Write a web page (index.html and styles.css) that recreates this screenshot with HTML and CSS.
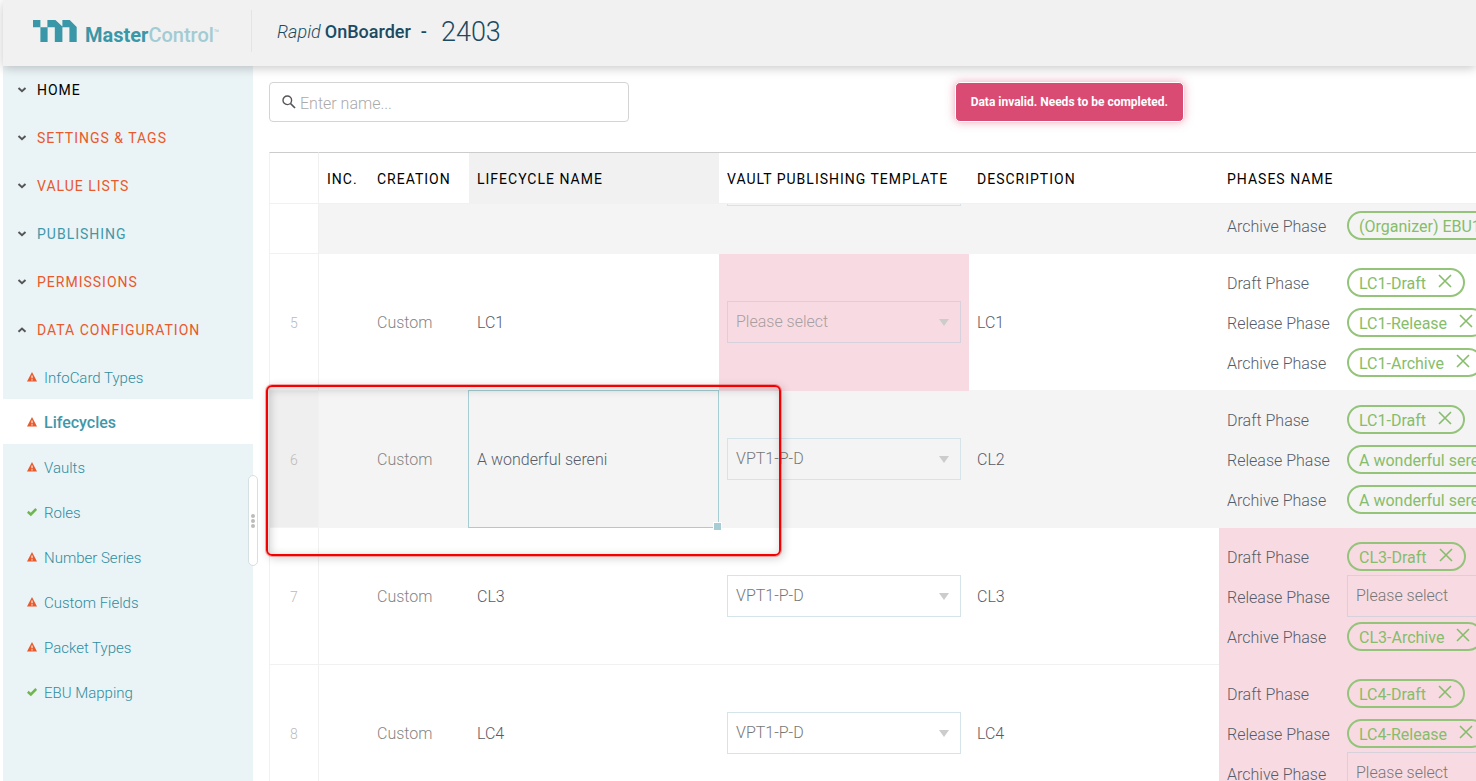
FILE: index.html
```html
<!DOCTYPE html>
<html lang="en">
<head>
<meta charset="utf-8">
<title>Rapid OnBoarder</title>
<link rel="stylesheet" href="styles.css">
</head>
<body>
<svg class="sprite" aria-hidden="true">
  <symbol id="down" viewBox="0 0 10 8"><path d="M1.5 2 5 5.3 8.5 2" fill="none" stroke="currentColor" stroke-width="1.9"/></symbol>
  <symbol id="up" viewBox="0 0 10 8"><path d="M1.5 5.8 5 2.5 8.5 5.8" fill="none" stroke="currentColor" stroke-width="1.9"/></symbol>
  <symbol id="warn" viewBox="0 0 10 10"><path d="M5 .1 10 9.6H0z" fill="#e8592b"/><path d="M5 3.4v2.8M5 7.2v1.2" stroke="#fff" stroke-width="1.1"/></symbol>
  <symbol id="ok" viewBox="0 0 10 10"><path d="M.8 4.8 3.8 7.5 9.2 2" fill="none" stroke="#6fb74c" stroke-width="2.5"/></symbol>
  <symbol id="close" viewBox="0 0 14 14"><path d="M1 1 13 13M13 1 1 13" fill="none" stroke="currentColor" stroke-width="1.6"/></symbol>
</svg>
<div class="app">
  <header class="topbar">
    <a class="brand" href="#" aria-label="MasterControl">
      <svg class="mark" width="44" height="22" viewBox="0 0 44 22"><path fill="#3a97a8" d="M0 0h7.4v7.3H0zM7.4 7.3h7V0h8l7 6.5V0h7.3L43.7 7v15h-7.3V7.3h-7V22h-7.6V7.3h-7.2V22H7.4z"/></svg>
      <span class="wordmark">Master<span class="wordmark-light">Control</span><span class="tm">™</span></span>
    </a>
    <h1 class="title"><em>Rapid</em> <strong>OnBoarder</strong><strong class="dash">-</strong><span class="release">2403</span></h1>
  </header>
  <div class="body">
    <nav class="sidebar">
      <button class="group current"><svg><use href="#down"/></svg>HOME</button>
      <button class="group alert"><svg><use href="#down"/></svg>SETTINGS &amp; TAGS</button>
      <button class="group alert"><svg><use href="#down"/></svg>VALUE LISTS</button>
      <button class="group"><svg><use href="#down"/></svg>PUBLISHING</button>
      <button class="group alert"><svg><use href="#down"/></svg>PERMISSIONS</button>
      <button class="group alert"><svg><use href="#up"/></svg>DATA CONFIGURATION</button>
      <a class="item" href="#"><svg><use href="#warn"/></svg><span>InfoCard Types</span></a>
      <a class="item active" href="#"><svg><use href="#warn"/></svg><span>Lifecycles</span></a>
      <a class="item" href="#"><svg><use href="#warn"/></svg><span>Vaults</span></a>
      <a class="item" href="#"><svg><use href="#ok"/></svg><span>Roles</span></a>
      <a class="item" href="#"><svg><use href="#warn"/></svg><span>Number Series</span></a>
      <a class="item" href="#"><svg><use href="#warn"/></svg><span>Custom Fields</span></a>
      <a class="item" href="#"><svg><use href="#warn"/></svg><span>Packet Types</span></a>
      <a class="item" href="#"><svg><use href="#ok"/></svg><span>EBU Mapping</span></a>
      <button class="resizer" aria-label="Resize sidebar"><i></i><i></i><i></i></button>
    </nav>
    <main class="main">
      <div class="toolbar">
        <label class="search">
          <svg width="14" height="14" viewBox="0 0 14 14"><circle cx="5.3" cy="5.3" r="4.3" fill="none" stroke="#555" stroke-width="1.4"/><path d="M8.5 8.5 13 13" stroke="#555" stroke-width="1.7"/></svg>
          <input type="text" placeholder="Enter name..." aria-label="Enter name">
        </label>
        <div class="toast" role="alert">Data invalid. Needs to be completed.</div>
      </div>
      <div class="grid">
        <table>
          <colgroup><col class="c-num"><col class="c-inc"><col class="c-creation"><col class="c-wide"><col class="c-wide"><col class="c-wide"><col class="c-phases"></colgroup>
          <thead>
            <tr><th class="num"></th><th>INC.</th><th>CREATION</th><th class="sel">LIFECYCLE NAME</th><th>VAULT PUBLISHING TEMPLATE</th><th>DESCRIPTION</th><th>PHASES NAME</th></tr>
          </thead>
          <tbody>
            <tr class="shade">
              <td class="num plain"></td><td></td><td></td><td></td>
              <td><span class="select"><select aria-label="Vault publishing template"></select></span></td><td></td>
              <td><div class="phase"></div><div class="phase"></div>
                <div class="phase"><span class="label">Archive Phase</span><span class="pill">(Organizer) EBU1</span></div></td>
            </tr>
            <tr id="row-5">
              <td class="num">5</td><td></td><td class="muted">Custom</td><td>LC1</td>
              <td class="invalid"><span class="select faded"><select aria-label="Vault publishing template"><option>Please select</option></select></span></td><td>LC1</td>
              <td>
                <div class="phase"><span class="label">Draft Phase</span><span class="pill">LC1-Draft<button aria-label="Remove"><svg><use href="#close"/></svg></button></span></div>
                <div class="phase"><span class="label">Release Phase</span><span class="pill">LC1-Release<button aria-label="Remove"><svg><use href="#close"/></svg></button></span></div>
                <div class="phase"><span class="label">Archive Phase</span><span class="pill">LC1-Archive<button aria-label="Remove"><svg><use href="#close"/></svg></button></span></div>
              </td>
            </tr>
            <tr class="shade">
              <td class="num">6</td><td></td><td class="muted">Custom</td><td class="picked">A wonderful sereni</td>
              <td><span class="select"><select aria-label="Vault publishing template"><option>VPT1-P-D</option></select></span></td><td>CL2</td>
              <td>
                <div class="phase"><span class="label">Draft Phase</span><span class="pill">LC1-Draft<button aria-label="Remove"><svg><use href="#close"/></svg></button></span></div>
                <div class="phase"><span class="label">Release Phase</span><span class="pill">A wonderful sereni</span></div>
                <div class="phase"><span class="label">Archive Phase</span><span class="pill">A wonderful sereni</span></div>
              </td>
            </tr>
            <tr>
              <td class="num">7</td><td></td><td class="muted">Custom</td><td>CL3</td>
              <td><span class="select"><select aria-label="Vault publishing template"><option>VPT1-P-D</option></select></span></td><td>CL3</td>
              <td class="invalid">
                <div class="phase"><span class="label">Draft Phase</span><span class="pill">CL3-Draft<button aria-label="Remove"><svg><use href="#close"/></svg></button></span></div>
                <div class="phase"><span class="label">Release Phase</span><span class="select"><select aria-label="Release phase"><option>Please select</option></select></span></div>
                <div class="phase"><span class="label">Archive Phase</span><span class="pill">CL3-Archive<button aria-label="Remove"><svg><use href="#close"/></svg></button></span></div>
              </td>
            </tr>
            <tr>
              <td class="num">8</td><td></td><td class="muted">Custom</td><td>LC4</td>
              <td><span class="select"><select aria-label="Vault publishing template"><option>VPT1-P-D</option></select></span></td><td>LC4</td>
              <td class="invalid">
                <div class="phase"><span class="label">Draft Phase</span><span class="pill">LC4-Draft<button aria-label="Remove"><svg><use href="#close"/></svg></button></span></div>
                <div class="phase"><span class="label">Release Phase</span><span class="pill">LC4-Release<button aria-label="Remove"><svg><use href="#close"/></svg></button></span></div>
                <div class="phase"><span class="label">Archive Phase</span><span class="select"><select aria-label="Archive phase"><option>Please select</option></select></span></div>
              </td>
            </tr>
          </tbody>
        </table>
      </div>
      <div class="highlight"></div>
    </main>
  </div>
</div>
<script src="app.js"></script>
</body>
</html>
```

FILE: app.js
```js
// Open the grid with row 5 as the first fully visible row, one phase line below the header.
document.querySelector('.grid').scrollTop = 87;
```

FILE: styles.css
```css
* { box-sizing: border-box; }
body { margin: 0; background: #fff; color: #565c68; font: 300 16px/20px Roboto, "Liberation Sans", sans-serif; overflow: hidden; }
button, input, select { font: inherit; color: inherit; }
button { border: 0; background: none; padding: 0; cursor: pointer; }
a { text-decoration: none; }
.sprite { position: absolute; width: 0; height: 0; }

.app { display: flex; flex-direction: column; height: 100vh; margin-left: 3px; }

.topbar { display: flex; align-items: center; height: 66px; flex: none; padding: 0 30px 4px; background: #f1f1f1; box-shadow: 0 2px 10px rgba(0, 0, 0, .22); position: relative; z-index: 5; }
.brand { display: flex; align-items: center; gap: 8px; width: 219px; height: 42px; border-right: 1px solid #e2e5e6; color: #3a97a8; }
.wordmark { font-size: 20px; line-height: 24px; font-weight: 700; padding-top: 5px; white-space: nowrap; }
.wordmark-light { font-weight: 500; color: #a3cbd2; }
.tm { font-size: 9px; font-weight: 400; color: #a3cbd2; vertical-align: 6px; }
.title { display: flex; align-items: center; margin: 0 0 0 25px; padding-top: 2px; font-size: 18px; line-height: 32px; font-weight: 300; color: #1c4a61; gap: 4px; }
.title strong { font-weight: 500; }
.dash { margin-left: 6px; }
.release { font-size: 27px; margin-left: 10px; }

.body { display: flex; flex: 1; min-height: 0; }
.sidebar { position: relative; z-index: 2; width: 250px; flex: none; background: #eaf3f6; color: #3f98a9; }
.group { display: flex; align-items: center; gap: 10px; width: 100%; height: 48px; padding-left: 14px; font-size: 14px; font-weight: 400; letter-spacing: 1px; text-align: left; }
.group svg { width: 10px; height: 8px; color: #555; }
.group.current { color: #000; }
.group.alert { color: #e8592b; }
.item { display: flex; align-items: center; gap: 7px; height: 45px; padding-left: 24px; font-size: 15px; font-weight: 300; color: #2f8c9e; }
.item span { padding-top: 2px; }
.item svg { width: 10px; height: 10px; }
.item.active { background: #fff; font-size: 16px; font-weight: 500; color: #3f98a9; }
.resizer { position: absolute; right: -5px; top: 409px; display: flex; flex-direction: column; align-items: center; justify-content: center; gap: 1px; width: 10px; height: 91px; border: 1px solid #d5e0e4; border-radius: 5px; background: #fff; }
.resizer i { width: 4px; height: 4px; border-radius: 50%; background: #bcbcbc; }

.main { position: relative; flex: 1; min-width: 0; display: flex; flex-direction: column; padding: 16px 0 0 16px; }
.toolbar { display: flex; justify-content: space-between; height: 70px; flex: none; padding-right: 292px; }
.search { display: flex; align-items: center; gap: 4px; width: 360px; height: 40px; padding-left: 12px; border: 1px solid #d4d4d4; border-radius: 4px; }
.search input { flex: 1; min-width: 0; border: 0; outline: 0; padding: 4px 0 0; background: none; }
.search input::placeholder { color: #aaa; }
.toast { height: 40px; padding: 0 15px; border: 1px solid #fff; border-radius: 5px; background: #da4b73; color: #fff; font-size: 12px; line-height: 38px; font-weight: 700; white-space: nowrap; box-shadow: 0 0 10px rgba(218, 75, 115, .5); }

.grid { flex: 1; min-height: 0; overflow: hidden; }
table { width: 1450px; table-layout: fixed; border-collapse: separate; border-spacing: 0; }
.c-num, .c-inc { width: 50px; }
.c-creation { width: 100px; }
.c-wide { width: 250px; }
.c-phases { width: 500px; }
th, td { padding: 2px 8px 0; text-align: left; border-bottom: 1px solid #f1f1f1; }
th { position: sticky; top: 0; z-index: 1; height: 52px; background: #fff; border-top: 1px solid #ccc; color: #000; font-size: 14px; font-weight: 400; letter-spacing: 1px; white-space: nowrap; }
th.sel { background: #f1f1f1; }
td { height: 137px; }
.num { padding: 2px 0 0; border-left: 1px solid #f1f1f1; border-right: 1px solid #f1f1f1; text-align: center; font-size: 14px; color: #bbb; }
.shade td { background: #f4f4f4; border-bottom-color: #f4f4f4; }
.shade .num { background: #efefef; }
.shade .plain { background: #fff; border-bottom-color: #f1f1f1; }
#row-5 td { border-bottom-color: #f4f4f4; }
td.invalid, #row-5 td.invalid { background: #f8dbe2; border-bottom-color: #f8dbe2; }
.muted { color: #858585; }
.picked { position: relative; }
.picked::before { content: ""; position: absolute; inset: -1px 0 -1px -1px; border: 1px solid #a5cdd3; }
.picked::after { content: ""; position: absolute; right: -3px; bottom: -4px; width: 7px; height: 7px; background: #a5cdd3; border: 1px solid #fff; z-index: 1; }

.select { position: relative; display: block; width: 234px; height: 42px; flex: none; margin-top: -2px; }
.select select { appearance: none; width: 100%; height: 100%; padding: 0 30px 0 8px; border: 1px solid #d5e4e8; border-radius: 0; background: transparent; color: #777; opacity: 1; }
.select::after { content: ""; position: absolute; right: 12px; top: 18px; border: 5px solid transparent; border-top: 7px solid #ccc; border-bottom: 0; }
tr:not(.shade) td:not(.invalid) .select { background: #fff; }
.invalid select { border-color: #d6d1da; }
.select.faded select { color: #a89da0; }

.phase { display: flex; align-items: center; height: 40px; }
.phase .label { width: 120px; flex: none; padding-top: 2px; }
.pill { display: flex; align-items: center; gap: 12px; height: 29px; margin-top: -2px; padding: 3px 11px 0 10px; border: 2px solid #93c47a; border-radius: 15px; color: #86bd6a; font-weight: 400; white-space: nowrap; }
.pill button { height: 14px; margin-top: -5px; }
.pill svg { display: block; width: 14px; height: 14px; }

.highlight { position: absolute; left: 13px; top: 319px; width: 515px; height: 171px; border: 2px solid #f40000; border-radius: 6px; box-shadow: 0 0 0 1px rgba(240, 60, 60, .4), 2px 2px 10px rgba(0, 0, 0, .2), inset 2px 2px 10px rgba(0, 0, 0, .2); pointer-events: none; }
```
